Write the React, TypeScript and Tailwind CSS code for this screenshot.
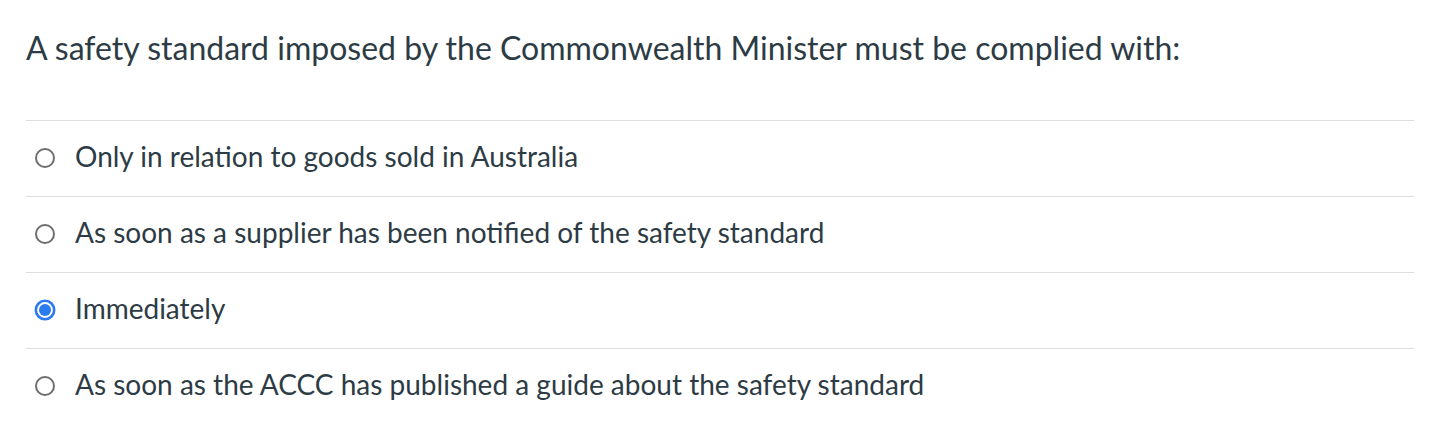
import React from "react";

const options = [
  "Only in relation to goods sold in Australia",
  "As soon as a supplier has been notified of the safety standard",
  "Immediately",
  "As soon as the ACCC has published a guide about the safety standard",
];

function Radio({ checked }: { checked: boolean }) {
  return (
    <svg width="22" height="22" viewBox="0 0 22 22" className="block shrink-0">
      {checked ? (
        <>
          <circle cx="11" cy="11" r="9.2" fill="#ffffff" stroke="#2b7bf0" strokeWidth="2.6" />
          <circle cx="11" cy="11" r="6" fill="#2b7bf0" />
        </>
      ) : (
        <circle cx="11" cy="11" r="9" fill="#ffffff" stroke="#6e6e6e" strokeWidth="2" />
      )}
    </svg>
  );
}

export default function App() {
  return (
    <div className="min-h-[442px] w-[1442px] bg-white pl-[26px] pr-[28px] text-[#2d3b45]" style={{ fontFamily: "Lato, 'Noto Sans', sans-serif" }}>
      <div className="pt-[28px] text-[32px] leading-[40px]">
        A safety standard imposed by the Commonwealth Minister must be complied with:
      </div>
      <div className="mt-[52px]">
        {options.map((o, i) => (
          <div key={i} className="flex h-[76px] items-center gap-[19px] border-t border-[#dddddd] pb-[2px] pl-[8px]">
            <Radio checked={i === 2} />
            <span className="mb-[4px] text-[28px] leading-[30px]">{o}</span>
          </div>
        ))}
      </div>
    </div>
  );
}
